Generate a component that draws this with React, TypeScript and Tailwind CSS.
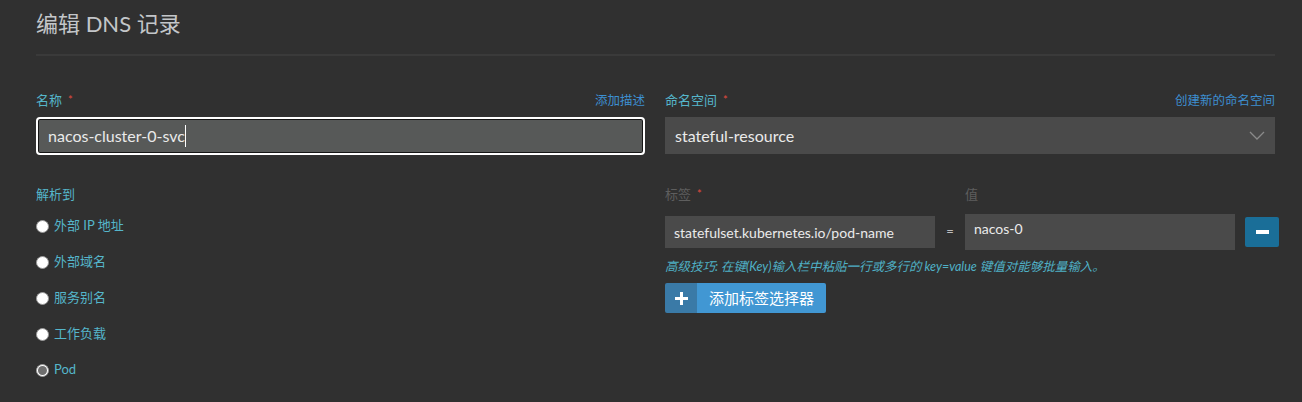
import React from "react";

const targets = ["外部 IP 地址", "外部域名", "服务别名", "工作负载", "Pod"];

const Star = () => <span className="ml-[6px] text-[11px] text-[#e04a3f] self-start mt-[1px]">*</span>;

const Radio = ({ label, checked }: { label: string; checked?: boolean }) => (
  <div className="flex items-center h-[36px]">
    <span className="w-[13px] h-[13px] rounded-full bg-white border border-[#9a9a9a] flex items-center justify-center">
      {checked && <span className="w-[9px] h-[9px] rounded-full bg-[#6f6f6f]" />}
    </span>
    <span className="ml-[5px] text-[13px] text-[#55b6cb]">{label}</span>
  </div>
);

export default function App() {
  return (
    <div className="w-[1302px] h-[402px] overflow-hidden bg-[#303030] pl-[36px] pr-[27px] font-['Lato','Noto_Sans_CJK_SC',sans-serif]">
      {/* header */}
      <div className="pt-[9px] pb-[15px] border-b-2 border-[#3a3a3a] text-[22px] leading-[30px] text-[#c3c6c9]">
        编辑 DNS 记录
      </div>

      <div className="grid grid-cols-[609px_minmax(0,1fr)] gap-x-[20px] mt-[35px]">
        {/* name */}
        <div>
          <div className="flex justify-between items-center h-[20px] mb-[6px]">
            <span className="flex items-center text-[13px] text-[#55b6cb]">名称<Star /></span>
            <span className="text-[12.5px] text-[#3d8fd1]">添加描述</span>
          </div>
          <div className="h-[38px] rounded-[4px] border-2 border-white bg-[#575958] shadow-[inset_0_0_0_1px_#151515] flex items-center pl-[10px] text-[16px] text-[#eaeaea]">
            nacos-cluster-0-svc
            <span className="w-px h-[22px] bg-white" />
          </div>
        </div>

        {/* namespace */}
        <div>
          <div className="flex justify-between items-center h-[20px] mb-[6px]">
            <span className="flex items-center text-[13px] text-[#55b6cb]">命名空间<Star /></span>
            <span className="text-[12.5px] text-[#3d8fd1]">创建新的命名空间</span>
          </div>
          <div className="h-[37px] bg-[#4a4a4a] flex items-center justify-between pl-[10px] pr-[10px] text-[16px] text-[#eaeaea]">
            stateful-resource
            <svg width="16" height="10" viewBox="0 0 16 10" fill="none">
              <path d="M1 1l7 7 7-7" stroke="#8a8a8a" strokeWidth="1.3" />
            </svg>
          </div>
        </div>

        {/* resolve target */}
        <div className="mt-[30px]">
          <div className="h-[20px] flex items-center text-[13px] text-[#55b6cb]">解析到</div>
          <div className="mt-[3px] flex flex-col">
            {targets.map((t) => (
              <Radio key={t} label={t} checked={t === "Pod"} />
            ))}
          </div>
        </div>

        {/* selectors */}
        <div className="mt-[30px]">
          <div className="flex h-[20px] items-center text-[13px] text-[#5e5e5e]">
            <span className="w-[300px] flex items-center">标签<Star /></span>
            <span>值</span>
          </div>
          <div className="mt-[9px] flex items-center h-[36px]">
            <div className="shrink-0 w-[270px] h-[32px] bg-[#4a4a4a] flex items-center pl-[9px] text-[14px] text-[#eaeaea]">
              statefulset.kubernetes.io/pod-name
            </div>
            <span className="shrink-0 w-[30px] text-center text-[13px] text-[#bdbdbd]">=</span>
            <div className="shrink-0 w-[270px] h-[36px] bg-[#4a4a4a] pl-[9px] pt-[5px] leading-[20px] text-[14px] text-[#eaeaea]">
              nacos-0
            </div>
            <button className="shrink-0 ml-[10px] w-[34px] h-[30px] rounded-[2px] bg-[#1a6e98] flex items-center justify-center">
              <span className="w-[13px] h-[4px] bg-white" />
            </button>
          </div>
          <div className="mt-[9px] h-[16px] leading-[16px] text-[12.5px] italic text-[#4fb0c6] whitespace-nowrap">
            高级技巧: 在键(Key)输入栏中粘贴一行或多行的 key=value 键值对能够批量输入。
          </div>
          <button className="mt-[8px] flex h-[30px] rounded-[2px] overflow-hidden">
            <span className="w-[32px] bg-[#3a7aa7] flex items-center justify-center">
              <svg width="13" height="13" viewBox="0 0 13 13">
                <path d="M5 0h3v5h5v3H8v5H5V8H0V5h5z" fill="white" />
              </svg>
            </span>
            <span className="bg-[#4197d3] flex items-center px-[12px] text-[15px] text-white">添加标签选择器</span>
          </button>
        </div>
      </div>
    </div>
  );
}
